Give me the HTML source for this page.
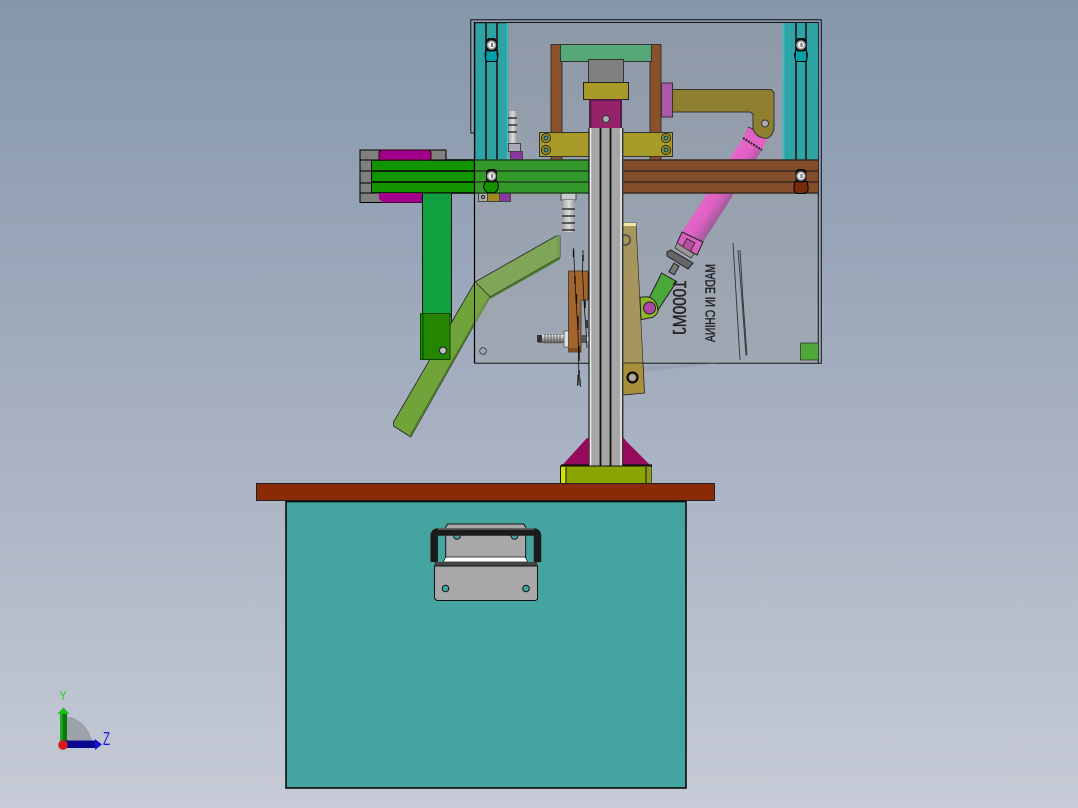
<!DOCTYPE html>
<html><head><meta charset="utf-8"><style>
html,body{margin:0;padding:0;width:1078px;height:808px;overflow:hidden}
svg{display:block}
</style></head><body>
<svg width="1078" height="808" viewBox="0 0 1078 808" xmlns="http://www.w3.org/2000/svg">
<defs>
<linearGradient id="bg" x1="0" y1="0" x2="0" y2="1"><stop offset="0" stop-color="#8696ab"/><stop offset=".5" stop-color="#a5afc0"/><stop offset="1" stop-color="#c6cbd6"/></linearGradient>
<linearGradient id="pink" gradientUnits="userSpaceOnUse" x1="705" y1="175" x2="737" y2="197"><stop offset="0" stop-color="#ea6cd0"/><stop offset=".6" stop-color="#e060c4"/><stop offset="1" stop-color="#8d5a90"/></linearGradient>
<linearGradient id="spr" x1="0" y1="0" x2="0" y2="1"><stop offset="0" stop-color="#eee"/><stop offset="1" stop-color="#555"/></linearGradient>
<linearGradient id="scr" x1="0" y1="0" x2="1" y2="0"><stop offset="0" stop-color="#aaa"/><stop offset=".5" stop-color="#ddd"/><stop offset="1" stop-color="#999"/></linearGradient>
<g id="bolt"><path d="M-3-7H3L5.500-5V4L3 6.500H-3L-5.500 4V-5z" fill="#111"/><circle r="4.800" fill="#a0a0a0"/><circle r="3.200" fill="#f2f2f2"/><rect x="-.5" y="-2" width="2" height="4" fill="#777"/></g>
</defs>
<rect width="1078" height="808" fill="url(#bg)"/>

<!-- clear panel tint -->
<rect x="475" y="22" width="344" height="341" fill="#a0a0a0" opacity=".3"/>
<!-- flap / frame -->
<path d="M474.500 133H470.800V19.800H821.300V363.300H474.500" fill="none" stroke="#111" stroke-width="1"/>
<path d="M474.700 22.500H818.300V363" fill="none" stroke="#111" stroke-width="1"/>
<polygon points="644,366 720,363 644,372" fill="#8f99a9" opacity=".6"/>

<!-- rails -->
<rect x="475" y="23" width="33" height="137" fill="#2ea3a5" stroke="#222" stroke-width=".6"/>
<rect x="506.800" y="23" width="1.500" height="137" fill="#44c0c0"/>
<path d="M486 23V160M497 23V160" stroke="#222" stroke-width="1.800"/>
<rect x="783.500" y="23" width="34.500" height="137" fill="#2ea3a5"/>
<path d="M783.800 23V160" stroke="#1ec8c8" stroke-width="1.500"/>
<path d="M796 23V160M806 23V160" stroke="#222" stroke-width="1.800"/>
<path d="M486 50.500h11v3l.5 5-1 3h-10l-1-3 .5-5z" fill="#00a0a8" stroke="#000" stroke-width="1"/>
<path d="M795.500 50.500h11v3l.5 5-1 3h-10l-1-3 .5-5z" fill="#00a0a8" stroke="#000" stroke-width="1"/>
<path d="M484.500 52.500h1.500v5h-1.500zM497 52.500h1.500v5H497zM794 52.500h1.500v5H794zM806.500 52.500h1.500v5h-1.500z" fill="#111"/>
<use href="#bolt" x="491.500" y="45"/>
<use href="#bolt" x="801" y="45"/>

<!-- posts / top frame -->
<rect x="551" y="44.500" width="11" height="116" fill="#8a512b" stroke="#333"/>
<rect x="650" y="44.500" width="11" height="116" fill="#8a512b" stroke="#333"/>
<rect x="560.500" y="44.500" width="91" height="17" fill="#56a878" stroke="#333"/>
<rect x="661.500" y="83" width="11" height="34" fill="#aa5aa8" stroke="#333"/>

<!-- pink cylinder -->
<polygon points="743,138 762,150 703,242 682,232" fill="url(#pink)"/>
<polygon points="748,127 770,132 762,150 743,138" fill="#e060c4"/>
<path d="M743 138l19 12" stroke="#222" stroke-width="2" stroke-dasharray="2 1"/>
<path d="M748 127l19 8" stroke="#333" stroke-width="1.200" stroke-dasharray="2 1"/>

<!-- olive arm -->
<path d="M672.500 89.500H771l3 3V128q-1 7-6 10q-8 1-13-5l-2-4v-15l-3-2H672.500z" fill="#8f8030" stroke="#333"/>
<circle cx="765" cy="123.500" r="3.500" fill="#a8adb8" stroke="#333"/>

<!-- gold plate -->
<rect x="539.500" y="132.500" width="133" height="24" fill="#a89a28" stroke="#333"/>
<g fill="#3aa" stroke="#222"><circle cx="546" cy="138" r="2"/><circle cx="546" cy="150" r="2"/><circle cx="666" cy="138" r="2"/><circle cx="666" cy="150" r="2"/></g>
<g fill="none" stroke="#222"><circle cx="546" cy="138" r="4.500"/><circle cx="546" cy="150" r="4.500"/><circle cx="666" cy="138" r="4.500"/><circle cx="666" cy="150" r="4.500"/></g>

<!-- small hardware -->
<rect x="509" y="111" width="8" height="33" fill="url(#scr)"/>
<path d="M508 118h9M508 125h9M508 132h9" stroke="#333" stroke-width="1.500"/>
<rect x="508.500" y="143.500" width="12" height="8" fill="#aab" stroke="#444"/>
<rect x="510.500" y="151.500" width="12" height="8" fill="#8a35a0" stroke="#444"/>
<rect x="478.500" y="193" width="9" height="8.500" fill="#aaa" stroke="#444"/>
<rect x="487.500" y="193" width="12" height="8.500" fill="#a08a20" stroke="#444"/>
<rect x="499.500" y="193" width="11" height="8.500" fill="#8a35a0" stroke="#444"/>
<circle cx="483" cy="197" r="1.500" fill="none" stroke="#222"/>
<rect x="561" y="193" width="15" height="7" fill="#c5c8cc" stroke="#444"/>
<rect x="563" y="200" width="12" height="32" fill="url(#scr)"/>
<path d="M562 209h13M562 216h13M562 223h13M562 230h13" stroke="#333" stroke-width="1.400"/>

<!-- bars -->
<rect x="371.500" y="159.500" width="103" height="34" fill="#129400"/>
<rect x="474.500" y="159.500" width="114" height="34" fill="#33992b"/>
<rect x="623" y="159.500" width="195" height="34" fill="#844d2a"/>
<path d="M474 160H589M474 171H589M474 182H589M474 193H589" stroke="#242" stroke-width="1.400"/>
<path d="M371 160H475M371 171H475M371 182H475M371 193H475" stroke="#000" stroke-width="1.600"/>
<path d="M623 160H818M623 171H818M623 182H818M623 193H818" stroke="#3a2a1c" stroke-width="1.400"/>
<path d="M371.500 159V194" stroke="#000"/><path d="M474.500 22V363" stroke="#000" stroke-width="1.200"/>

<!-- gray blocks -->
<rect x="360" y="150" width="86" height="10" fill="#808080" stroke="#000"/>
<path d="M379 160v-8l2-2h48l2 2v8z" fill="#a0008a" stroke="#300"/>
<rect x="360" y="160" width="11.500" height="11" fill="#808080" stroke="#000"/>
<rect x="360" y="171" width="11.500" height="12" fill="#808080" stroke="#000"/>
<rect x="360" y="183" width="11.500" height="10" fill="#808080" stroke="#000"/>
<rect x="360" y="193" width="62" height="9.500" fill="#808080" stroke="#000"/>
<path d="M379 193v6l4 3.500h39V193z" fill="#a0008a"/>
<path d="M485.500 181.500h12l1 4.500-1 4-3 2.800h-7l-3-2.800-1-4z" fill="#129400" stroke="#000"/>
<path d="M795 181.500h12l1 4.500v5l-3 2.500h-8l-3-2.500v-5z" fill="#782a08" stroke="#000"/>
<use href="#bolt" x="491.500" y="176"/>
<use href="#bolt" x="801" y="176"/>

<!-- green arm -->
<rect x="422.500" y="193" width="29" height="123" fill="#10a040" stroke="#111"/>
<rect x="451" y="316" width="1" height="34" fill="#111"/>

<!-- lever -->
<polygon points="475,282 490,297 410.700,437 393.500,426 393.500,422" fill="#70a43a" stroke="#222" stroke-width=".8"/>
<polygon points="490,297 410.700,437 409,436 488,297" fill="#4f7a2a"/>
<polygon points="475,282 556,236 560,236 560,257 490,297" fill="#7fa658" stroke="#222" stroke-width=".8"/>
<polygon points="490,297 560,257 560,259.500 490,299" fill="#4f7a2a"/>
<polygon points="557,236 560,236 560,257 557,258" fill="#759a50"/>
<path d="M475 282L490 297" stroke="#222"/>
<polygon points="475,282 490,297 475,325" fill="#7aa448" opacity=".7"/>
<path d="M474.500 282V326" stroke="#000" stroke-width="1"/>
<rect x="420.500" y="313.500" width="2.500" height="46" fill="#128a00" stroke="#0a5000"/>
<rect x="423" y="313.500" width="27" height="46" fill="#258500" stroke="#0a4000"/>
<circle cx="443" cy="350.500" r="3.500" fill="#b8c0c8" stroke="#222"/>
<circle cx="483" cy="351" r="3.300" fill="none" stroke="#333" stroke-width=".8"/>

<!-- tan arm -->
<polygon points="623,223 636,223 638,263 643,363 623,363" fill="#a6955c" stroke="#222" stroke-width=".6"/>
<polygon points="623,223 636,223 636,226 623,226" fill="#f0e8a0"/>
<polygon points="623,363 643,363 644.500,393 623,395" fill="#a88f3a" stroke="#222" stroke-width=".8"/>
<circle cx="632.500" cy="377.500" r="5" fill="none" stroke="#000" stroke-width="2"/><circle cx="632.500" cy="377.500" r="3" fill="#aab"/>
<path d="M623 235.500a5 5 0 1 1 0 9" fill="none" stroke="#444" stroke-width="1.500"/>

<!-- brown bracket -->
<path d="M568.500 271H588V300H581V352H568.500z" fill="#a3652b" stroke="#333" stroke-width=".8"/>
<rect x="568.500" y="348" width="12.500" height="4" fill="#7d4f22"/>
<rect x="538" y="335" width="26" height="8" fill="url(#spr)"/>
<path d="M545 334v10M548 334v10M551 334v10M554 334v10M557 334v10M560 334v10" stroke="#555" stroke-width=".9"/>
<rect x="537" y="335" width="5" height="7" fill="#333"/>
<rect x="564" y="331" width="4.500" height="16" fill="#ddd" stroke="#333" stroke-width=".6"/>
<rect x="581" y="335" width="5" height="8" fill="#555"/>
<rect x="586" y="337" width="2.500" height="4" fill="#ddd"/>
<path d="M573.500 248l1 22 1.500 30 2 30 .5 25 .5 30" fill="none" stroke="#111" stroke-width=".8"/>
<path d="M583 250l-.5 22 1.500 30 2 28 1 18" fill="none" stroke="#111" stroke-width=".8"/>
<path d="M573.500 250v7M575 276v8M576.500 294v10M578 316v14M579 346v15M579 370v8M583 255v6M585 300v8M587 320v8" fill="none" stroke="#111" stroke-width="1.400"/>
<path d="M578 375l-.5 11M580 378l.5 9" fill="none" stroke="#222" stroke-width="1"/>

<!-- pillar -->
<rect x="588.500" y="128" width="35" height="338" fill="#a6a6a6"/>
<path d="M589 128V466M622.800 128V466" stroke="#000" stroke-width="1"/>
<path d="M590.500 128V466M621 128V466" stroke="#eee" stroke-width="1.500"/>
<path d="M600.500 128V466M610.500 128V466" stroke="#111" stroke-width="1.800"/>

<!-- head -->
<rect x="588.500" y="59.500" width="35" height="25" fill="#808080" stroke="#333"/>
<rect x="583.500" y="82.500" width="45" height="17" fill="#a89a28" stroke="#222"/>
<rect x="589" y="99" width="33" height="29" fill="#561d4b"/>
<rect x="591.500" y="101" width="28.500" height="27" fill="#96226a"/>
<circle cx="606" cy="119" r="3.500" fill="#a8adb8" stroke="#333"/>

<!-- rod end + link -->
<polygon points="682,232 703,242 697,255 677,243" fill="#d85fc0" stroke="#222"/>
<rect x="684" y="240" width="9" height="11" fill="#b84fa0" stroke="#333" transform="rotate(28 688 245)"/>
<polygon points="677,243 694,254 691,258 675,248" fill="#999" stroke="#444"/>
<polygon points="671,250 693,263 688,269 667,256 667,252" fill="#666" stroke="#222"/>
<rect x="671" y="264" width="6" height="10" fill="#777" stroke="#222" transform="rotate(30 674 269)"/>
<polygon points="661.700,273 676.700,281.700 658,310 647,302" fill="#4aa83a" stroke="#222"/>
<path d="M640 297.300l8-.5q10 3 10 15q-3 6-8 6l-9 2z" fill="#8ab828" stroke="#222"/>
<circle cx="649.500" cy="308" r="6" fill="#ac46a8" stroke="#222"/>

<!-- mirrored text -->
<text transform="translate(686,280) rotate(90) scale(1,-1)" font-family="'Liberation Sans',sans-serif" font-size="18" fill="#222" stroke="#222" stroke-width=".4" textLength="55" lengthAdjust="spacingAndGlyphs">1000MJ</text>
<text transform="translate(715,264) rotate(90) scale(1,-1)" font-family="'Liberation Sans',sans-serif" font-size="14" fill="#222" stroke="#222" stroke-width=".4" textLength="78" lengthAdjust="spacingAndGlyphs">MADE IN CHINA</text>
<path d="M733 243l3 50 4 67M738 250l4 50 4 56M740 250l3 50 4 55" fill="none" stroke="#333" stroke-width=".9"/>
<rect x="800.500" y="343" width="18" height="17" fill="#50a838" stroke="#333" stroke-width=".8"/>

<!-- base -->
<polygon points="562.500,465 586,439 589,437 589,466" fill="#960a5c"/>
<polygon points="623,437 626,441 650,465 623,466" fill="#960a5c"/>
<path d="M561 465H589M623 465H652" stroke="#111" stroke-width="1.200"/>
<rect x="560.500" y="466" width="91" height="18" fill="#8ba400" stroke="#111"/>
<rect x="561" y="467" width="5" height="17" fill="#cfe400"/>
<rect x="646.500" y="467" width="5" height="17" fill="#8f9a20"/>
<path d="M566 467V484M646 467V484" stroke="#111"/>

<!-- table -->
<rect x="256.500" y="483.500" width="458" height="17" fill="#8b2a06" stroke="#222"/>
<!-- box -->
<rect x="286" y="501.500" width="400" height="286.500" fill="#44a5a0" stroke="#0b0b0b" stroke-width="1.600"/>

<!-- handle -->
<path d="M445.700 558V527l2-3h76l2 3V558z" fill="#a8a8a8" stroke="#111" stroke-width="1"/>
<circle cx="457" cy="536" r="3.300" fill="#44a5a0" stroke="#111"/>
<circle cx="514.500" cy="536" r="3.300" fill="#44a5a0" stroke="#111"/>
<polygon points="443,562 446,557 525,557 528,562" fill="#fff" stroke="#111" stroke-width=".7"/>
<path d="M434.200 562V536q0-4 4-4H533.500q4 0 4 4V562" fill="none" stroke="#1b1b1b" stroke-width="7.500"/>
<rect x="434.500" y="562" width="103" height="5" fill="#444"/>
<path d="M434.500 566H537.500V599l-2 1.500H437l-2.500-2z" fill="#a8a8a8" stroke="#111"/>
<circle cx="445.500" cy="588.500" r="3.300" fill="#44a5a0" stroke="#111"/>
<circle cx="526" cy="588.500" r="3.300" fill="#44a5a0" stroke="#111"/>
<path d="M438 529H534" stroke="#666" stroke-width="1.500"/>

<!-- triad -->
<path d="M63 743V716A30 30 0 0 1 92 743z" fill="#9ca1aa"/>
<rect x="60" y="713" width="7" height="28" fill="#0a7a10"/>
<rect x="60" y="713" width="2.500" height="28" fill="#20a828"/>
<polygon points="63.500,707.500 69.500,714 57.500,714" fill="#12c018"/>
<rect x="63" y="740.500" width="32" height="7.500" fill="#0a0a90"/>
<polygon points="102,744.500 95,739 95,750" fill="#1515d0"/>
<circle cx="63" cy="745" r="4.800" fill="#d81a1a"/>
<text x="59.500" y="700" font-family="'Liberation Sans',sans-serif" font-size="13" fill="#22d022" textLength="7" lengthAdjust="spacingAndGlyphs">Y</text>
<text x="103" y="745" font-family="'Liberation Sans',sans-serif" font-size="18" fill="#1a1ae0" textLength="7" lengthAdjust="spacingAndGlyphs">Z</text>
</svg>
</body></html>
